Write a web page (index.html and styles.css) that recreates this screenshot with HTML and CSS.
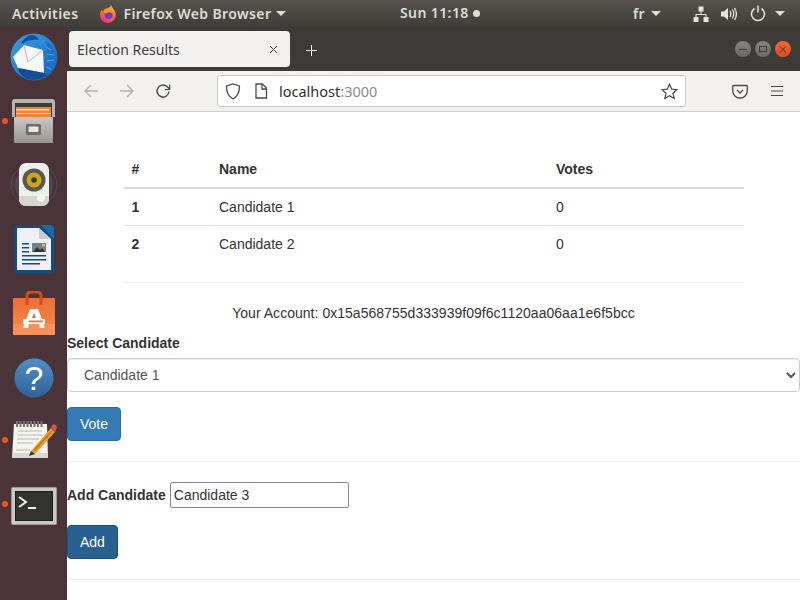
FILE: index.html
```html
<!DOCTYPE html>
<html lang="en">
<head>
    <meta charset="UTF-8">
    <title>Election Results</title>
    <link rel="stylesheet" href="styles.css">
</head>
<body>
    <header class="topbar">
        <span class="activities">Activities</span>
        <span class="app-menu">
            <svg class="fx-small" width="20" height="20" viewBox="0 0 20 20">
                <defs>
                    <linearGradient id="fxa" x1="0.7" y1="0" x2="0.3" y2="1"><stop offset="0" stop-color="#ffc02e"/><stop offset="0.5" stop-color="#ff6a2a"/><stop offset="1" stop-color="#e6308a"/></linearGradient>
                </defs>
                <path d="M13 1c.5 2 2 3 3.200 5 1.300 2.200 1.800 4.400 1.300 6.500C17 16 14 19 10 19c-4.500 0-8-3.500-8-8 0-2.200.7-4 2-5.500 0 1 .3 1.700 1 2.200C5.500 5.500 7 4.500 9 4.200 11 3.800 12.500 3 13 1z" fill="url(#fxa)"/>
                <circle cx="10.500" cy="11" r="4" fill="#6d3fc0"/>
                <path d="M5.500 8c1.500-1.600 3.500-2 5.500-1.500 2 .5 3 1.500 3.500 3-1.500-1.200-3.500-1.400-5-1-.8.300-1.200.8-1.300 1.500z" fill="#ff9a20"/>
            </svg>
            Firefox Web Browser <i class="caret"></i>
        </span>
        <span class="clock">Sun 11:18 <i class="dot"></i></span>
        <span class="status">
            <span class="lang">fr</span><i class="caret"></i>
            <svg class="net" width="16" height="16" viewBox="0 0 16 16" fill="#e6e4de"><rect x="5.500" y="0.500" width="5" height="5"/><rect x="0.500" y="11" width="5" height="5"/><rect x="10.500" y="11" width="5" height="5"/><path d="M7.500 5h1v3h5v3h-1V9h-9v2h-1V8h5z"/></svg>
            <svg class="vol" width="17" height="16" viewBox="0 0 17 16" fill="none"><path d="M1 5.500h3l4-3.500v12l-4-3.500H1z" fill="#e6e4de"/><path d="M10 5c1 1.800 1 4.200 0 6M12.300 3.500c1.800 2.800 1.800 6.200 0 9M14.500 2c2.300 3.600 2.300 8.400 0 12" stroke="#e6e4de" stroke-width="1.300"/></svg>
            <svg class="pow" width="16" height="17" viewBox="0 0 16 17" fill="none" stroke="#e6e4de" stroke-width="1.500"><path d="M4.500 3.500a6.500 6.500 0 1 0 7 0"/><path d="M8 0.500v7"/></svg>
            <i class="caret"></i>
        </span>
    </header>

    <div class="desktop">
        <nav class="dock">
            <div class="dock-item">
                <svg width="48" height="48" viewBox="0 0 48 48">
                    <defs>
                        <linearGradient id="tb" x1="0" y1="0" x2="1" y2="1"><stop offset="0" stop-color="#3aa0ea"/><stop offset="1" stop-color="#1560b0"/></linearGradient>
                    </defs>
                    <circle cx="24" cy="24" r="23.500" fill="url(#tb)"/>
                    <path d="M36 8c5 4 9 10 10 17-1 7-4 13-9 17 3-6 3-12 1-18-1-6-1-11-2-16z" fill="#1d6fc2"/>
                    <path d="M36 14l5 3M37 21l7 1M37 28l7-1M36 34l5 2" stroke="#8cc4ee" stroke-width="1" opacity="0.6"/>
                    <path d="M8 16C10 6 18 0 24 1c6 1 12 6 13 14-5-5-18-8-29 1z" fill="#2d8ddb"/>
                    <path d="M11 11c3-6 8-9 12-9 3 1 5 3 6 5-6-1-12 0-18 4z" fill="#164f93"/>
                    <circle cx="13" cy="9" r="1" fill="#0c2c55"/>
                    <path d="M3 24L14 12l19 5 1 23-26-5z" fill="#f6f7f9"/>
                    <path d="M14 12l4 17 15-12" fill="none" stroke="#b4bac6" stroke-width="1"/>
                    <path d="M8 35l26 5 3 2c-6 5-15 6-22 3-3-2-6-5-7-10z" fill="#134d92"/>
                </svg>
            </div>
            <div class="dock-item active">
                <svg width="43" height="44" viewBox="0 0 43 44">
                    <defs>
                        <linearGradient id="cab" x1="0" y1="0" x2="0" y2="1"><stop offset="0" stop-color="#c9c8c5"/><stop offset="1" stop-color="#96958f"/></linearGradient>
                    </defs>
                    <path d="M0 3c0-2 1-3 3-3h37c2 0 3 1 3 3v15H0z" fill="#b5b4b0"/>
                    <rect x="3" y="4" width="37" height="14" fill="#3f3d3a"/>
                    <rect x="4" y="8" width="35" height="10" fill="#ee8434"/>
                    <rect x="4" y="10" width="33" height="1.500" fill="#fbe3bd"/>
                    <rect x="4" y="14" width="35" height="1" fill="#fbd9ac"/>
                    <rect x="2" y="18" width="39" height="26" rx="1" fill="url(#cab)"/>
                    <rect x="14" y="25" width="15" height="11" rx="1.500" fill="#6d6c68"/>
                    <rect x="16.500" y="27.500" width="10" height="5.500" rx="1" fill="#e6e6e3"/>
                </svg>
            </div>
            <div class="dock-item">
                <svg width="48" height="46" viewBox="0 0 48 46">
                    <ellipse cx="24" cy="23" rx="23" ry="21" fill="none" stroke="#56698a" stroke-width="1" opacity="0.45"/>
                    <ellipse cx="24" cy="23" rx="19" ry="19" fill="#56698a" opacity="0.35"/>
                    <rect x="9" y="1" width="30" height="43" rx="7" fill="#efefea"/>
                    <path d="M9 34h30v3c0 4-3 7-7 7H16c-4 0-7-3-7-7z" fill="#d6d6d0"/>
                    <circle cx="24" cy="18" r="11.500" fill="#5a5852"/>
                    <circle cx="24" cy="18" r="7.500" fill="#c9a914"/>
                    <circle cx="24" cy="18" r="2.800" fill="#35342f"/>
                    <circle cx="31" cy="36" r="4" fill="#f2f2ee"/>
                </svg>
            </div>
            <div class="dock-item">
                <svg width="40" height="48" viewBox="0 0 40 48">
                    <rect x="0" y="0" width="40" height="48" rx="3" fill="#0f4f7e"/>
                    <path d="M3 3h22l12 11v31H3z" fill="#eef1f3"/>
                    <path d="M27 0h10l3 3v11z" fill="#1a6ca8"/>
                    <path d="M25 3l12 11H25z" fill="#c5ced6"/>
                    <rect x="18" y="18" width="14" height="9" fill="#6f8296"/>
                    <path d="M19 27l4-5 3 3 2-2 3 4z" fill="#3d3020"/>
                    <circle cx="29.500" cy="20" r="1.500" fill="#f0c040"/>
                    <path d="M8 18h7v1.500H8zM8 22h7v1.500H8zM8 26h7v1.500H8zM8 30h24v1.500H8zM8 34h24v1.500H8zM8 38h18v1.500H8z" fill="#0f4f7e"/>
                </svg>
            </div>
            <div class="dock-item">
                <svg width="42" height="44" viewBox="0 0 42 44">
                    <defs>
                        <linearGradient id="bag" x1="0" y1="0" x2="0" y2="1"><stop offset="0" stop-color="#ee6f33"/><stop offset="1" stop-color="#f68a4f"/></linearGradient>
                    </defs>
                    <rect x="0" y="7" width="42" height="37" fill="url(#bag)"/>
                    <rect x="0" y="33" width="42" height="11" fill="#f79159"/>
                    <path d="M14 14V5c0-2.500 1.500-4 4-4h6c2.500 0 4 1.500 4 4v9" fill="none" stroke="#c9501d" stroke-width="3"/>
                    <path d="M17 18h8l7 19h-5l-1-4H16l-1 4h-5z" fill="#fff"/>
                    <path d="M19 27l2-5 2 5z" fill="#ee6f33"/>
                    <rect x="10" y="28" width="22" height="5" rx="1" fill="#fff"/>
                    <rect x="16" y="29.500" width="14" height="1.800" fill="#ee6f33"/>
                </svg>
            </div>
            <div class="dock-item dock-help">
                <svg width="40" height="40" viewBox="0 0 40 40">
                    <defs><linearGradient id="hlp" x1="0" y1="0" x2="0" y2="1"><stop offset="0" stop-color="#4f8fc6"/><stop offset="1" stop-color="#2f6297"/></linearGradient></defs>
                    <circle cx="20" cy="20" r="19.500" fill="url(#hlp)"/>
                    <text x="20" y="32" text-anchor="middle" class="help-mark">?</text>
                </svg>
            </div>
            <div class="dock-item active">
                <svg width="46" height="38" viewBox="0 0 46 38">
                    <path d="M3 3h33l1 34H1z" fill="#f4f4ef"/>
                    <path d="M1.500 32h35.500v5H1z" fill="#d9d9d1"/>
                    <path d="M6 0v6M9.500 0v6M13 0v6M16.500 0v6M20 0v6M23.500 0v6M27 0v6M30.500 0v6" stroke="#77776f" stroke-width="2"/>
                    <path d="M7 10h24M7 14h24M6 18h22M6 22h16M5 29h14" stroke="#b9b9b1" stroke-width="1"/>
                    <path d="M21 29L40 7l4 4-19 21-6 2z" fill="#ef9d2e"/>
                    <path d="M23 28L41 9l1 1-18 20z" fill="#c97a16"/>
                    <path d="M40 6l2-3 3 1 1 3-2 4z" fill="#d9504a"/>
                    <path d="M18 35l2-5 4 3z" fill="#333"/>
                </svg>
            </div>
            <div class="dock-item dock-term active">
                <svg width="46" height="38" viewBox="0 0 46 38">
                    <rect x="0.500" y="0.500" width="45" height="37" rx="1" fill="#c9c9c5" stroke="#9a9a96"/>
                    <rect x="4" y="4" width="38" height="30" fill="#1d1d1c"/>
                    <rect x="5" y="5" width="36" height="28" fill="#333331"/>
                    <path d="M8 10l7 5-7 5" fill="none" stroke="#eee" stroke-width="2"/>
                    <rect x="17" y="20" width="8" height="2" fill="#eee"/>
                </svg>
            </div>
            <div class="dock-item apps">
                <i></i><i></i><i></i><i></i><i></i><i></i><i></i><i></i><i></i>
            </div>
        </nav>

        <main class="browser">
            <div class="tabbar">
                <div class="tab">
                    <span class="tab-title">Election Results</span>
                    <svg width="9" height="9" viewBox="0 0 9 9" stroke="#4a4a48" stroke-width="1"><path d="M1 1l7 7M8 1l-7 7"/></svg>
                </div>
                <svg class="newtab" width="13" height="13" viewBox="0 0 13 13" stroke="#f0f0ee" stroke-width="1"><path d="M6.500 1v11M1 6.500h11"/></svg>
                <div class="winbtns">
                    <span class="winbtn"><svg width="16" height="16" viewBox="0 0 16 16" stroke="#3c3b37" fill="none"><path d="M4 8.500h8"/></svg></span>
                    <span class="winbtn"><svg width="16" height="16" viewBox="0 0 16 16" stroke="#3c3b37" fill="none"><rect x="4.500" y="5.500" width="7" height="5"/></svg></span>
                    <span class="winbtn close"><svg width="16" height="16" viewBox="0 0 16 16" stroke="#3c3b37" fill="none"><path d="M5 5.500l6 6M11 5.500l-6 6"/></svg></span>
                </div>
            </div>

            <div class="navbar">
                <svg class="nav-back" width="16" height="16" viewBox="0 0 16 16" fill="none" stroke="#b0b0ae" stroke-width="1.300"><path d="M15 8H2M8 2L2 8l6 6"/></svg>
                <svg class="nav-fwd" width="16" height="16" viewBox="0 0 16 16" fill="none" stroke="#b0b0ae" stroke-width="1.300"><path d="M1 8h13M8 2l6 6-6 6"/></svg>
                <svg class="nav-reload" width="16" height="16" viewBox="0 0 16 16" fill="none" stroke="#4a4a48" stroke-width="1.400"><path d="M14 8.500A6 6 0 1 1 12 3.500L14.500 6"/><path d="M14.700 1.500v5h-5" stroke-width="1.200"/></svg>
                <div class="urlbar">
                    <svg width="16" height="17" viewBox="0 0 16 17" fill="none" stroke="#4a4a48" stroke-width="1.300"><path d="M8 1l6.500 2c0 6-1.500 10.500-6.500 13C3 13.500 1.500 9 1.500 3z"/></svg>
                    <svg class="pageicon" width="14" height="16" viewBox="0 0 14 16" fill="none" stroke="#4a4a48" stroke-width="1.300"><path d="M2 1h6.500L12.500 5v10H2z"/><path d="M8 1v5h4.500"/></svg>
                    <span class="host">localhost<span class="port">:3000</span></span>
                    <svg class="star" width="17" height="17" viewBox="0 0 17 17" fill="none" stroke="#4a4a48" stroke-width="1.200"><path d="M8.500 1.200l2.200 4.900 5.300.6-4 3.500 1.200 5.300-4.700-2.800-4.700 2.800 1.200-5.300-4-3.500 5.300-.6z"/></svg>
                </div>
                <svg class="pocket" width="16" height="15" viewBox="0 0 16 15" fill="none" stroke="#4a4a48" stroke-width="1.300"><path d="M1.500 1.500h13c.5 0 .8.300.8.800V7a7.300 7 0 0 1-14.600 0V2.300c0-.5.300-.8.800-.8z"/><path d="M5 6l3 3 3-3"/></svg>
                <svg class="menu" width="14" height="12" viewBox="0 0 14 12" stroke="#4a4a48" stroke-width="1.200"><path d="M1 1.500h12M1 6h12M1 10.500h12"/></svg>
            </div>

            <div class="page">
                <table class="results">
                    <thead>
                        <tr><th class="col-id">#</th><th class="col-name">Name</th><th>Votes</th></tr>
                    </thead>
                    <tbody>
                        <tr><th>1</th><td>Candidate 1</td><td>0</td></tr>
                        <tr><th>2</th><td>Candidate 2</td><td>0</td></tr>
                    </tbody>
                </table>
                <hr class="results-rule">
                <p class="account">Your Account: 0x15a568755d333939f09f6c1120aa06aa1e6f5bcc</p>

                <form class="vote-form">
                    <label for="candidate">Select Candidate</label>
                    <select id="candidate" class="select">
                        <option>Candidate 1</option>
                        <option>Candidate 2</option>
                    </select>
                    <button type="button" class="btn">Vote</button>
                </form>
                <hr>
                <form class="add-form">
                    <div class="add-row">
                        <label for="newCandidate">Add Candidate</label>
                        <input id="newCandidate" type="text" value="Candidate 3">
                    </div>
                    <button type="button" class="btn btn-dark">Add</button>
                </form>
                <hr>
            </div>
        </main>
    </div>
</body>
</html>
```

FILE: styles.css
```css
html, body {
    margin: 0;
    height: 100%;
    overflow: hidden;
}

body {
    width: 800px;
    height: 600px;
    display: flex;
    flex-direction: column;
    font-family: "Liberation Sans", Arial, sans-serif;
    font-size: 14px;
    line-height: 20px;
    color: #333;
    background-color: #fff;
}

/* barra superior */
.topbar {
    height: 27px;
    flex: none;
    display: flex;
    align-items: center;
    position: relative;
    z-index: 1;
    background: linear-gradient(#55534c, #3e3d38);
    color: #dfddd6;
    font-family: "Noto Sans", sans-serif;
    font-size: 14px;
    font-weight: 600;
    letter-spacing: 0.4px;
    white-space: nowrap;
}

.activities {
    margin-left: 12px;
}

.app-menu {
    margin-left: 20px;
    display: flex;
    align-items: center;
    gap: 5px;
}

.clock {
    position: absolute;
    left: 400px;
    top: 3px;
    display: flex;
    align-items: center;
    gap: 4px;
}

.dot {
    width: 7px;
    height: 7px;
    border-radius: 50%;
    background-color: #dfddd6;
}

.caret {
    display: inline-block;
    width: 0;
    height: 0;
    border-left: 5px solid transparent;
    border-right: 5px solid transparent;
    border-top: 5px solid #dfddd6;
}

.status {
    margin-left: auto;
    margin-right: 15px;
    display: flex;
    align-items: center;
}

.lang {
    margin-right: 6px;
}

.net {
    margin-left: 32px;
}

.vol {
    margin-left: 11px;
}

.pow {
    margin-left: 13px;
    margin-right: 9px;
}

.desktop {
    flex: 1;
    display: flex;
    min-height: 0;
}

/* dock */
.dock {
    width: 67px;
    flex: none;
    margin-top: -2px;
    background-color: #4a3439;
    display: flex;
    flex-direction: column;
    align-items: center;
}

.dock-item {
    height: 63.900px;
    flex: none;
    width: 100%;
    display: flex;
    align-items: center;
    justify-content: center;
    position: relative;
}

.dock-item.active::before {
    content: "";
    position: absolute;
    left: 2px;
    top: 50%;
    width: 6px;
    height: 6px;
    margin-top: -3px;
    border-radius: 50%;
    background-color: #e95420;
}

.dock-help svg {
    margin-top: 3px;
}

.dock-term svg {
    margin-top: 4px;
}

.help-mark {
    font-family: "Liberation Sans", sans-serif;
    font-size: 34px;
    fill: #fff;
}

.apps {
    display: grid;
    grid-template-columns: repeat(3, 6px);
    grid-auto-rows: 6px;
    gap: 6px;
    justify-content: center;
    align-content: center;
}

.apps i {
    border-radius: 50%;
    background-color: #eeeeec;
}

/* ventana del navegador */
.browser {
    flex: 1;
    min-width: 0;
    display: flex;
    flex-direction: column;
    overflow: hidden;
}

.tabbar {
    height: 44px;
    flex: none;
    display: flex;
    align-items: center;
    background-color: #3c3b37;
}

.tab {
    width: 221px;
    height: 36px;
    margin-left: 2px;
    padding: 0 12px 0 8px;
    box-sizing: border-box;
    display: flex;
    align-items: center;
    justify-content: space-between;
    background-color: #f2f1f0;
    border-radius: 4px;
    color: #3d3d3b;
    font-family: "Noto Sans", sans-serif;
    font-size: 14px;
}

.tab-title {
    padding-top: 2px;
}

.newtab {
    margin-left: 15px;
    margin-top: 2px;
}

.winbtns {
    margin-left: auto;
    margin-right: 9px;
    display: flex;
    gap: 4px;
}

.winbtn {
    width: 16px;
    height: 16px;
    border-radius: 50%;
    background: linear-gradient(#84837d, #6a6964);
}

.winbtn svg {
    display: block;
}

.winbtn.close {
    background: linear-gradient(#f0683a, #df4c18);
}

.navbar {
    height: 41px;
    flex: none;
    display: flex;
    align-items: center;
    box-sizing: border-box;
    background-color: #f2f1f0;
    border-bottom: 1px solid #cfcecc;
}

.nav-back {
    margin-left: 16px;
}

.nav-fwd {
    margin-left: 20px;
}

.nav-reload {
    margin-left: 20px;
}

.urlbar {
    width: 469px;
    height: 32px;
    margin-left: 46px;
    padding: 0 7px;
    box-sizing: border-box;
    display: flex;
    align-items: center;
    background-color: #fff;
    border: 1px solid #c9c8c6;
    border-radius: 3px;
    font-family: "Noto Sans", sans-serif;
    font-size: 14.500px;
    color: #2f2f2d;
}

.pageicon {
    margin-left: 13px;
}

.host {
    margin-left: 11px;
}

.port {
    color: #8a8a88;
}

.star {
    margin-left: auto;
}

.pocket {
    margin-left: 46px;
}

.menu {
    margin-left: 22px;
}

/* contenido */
.page {
    flex: 1;
    min-height: 0;
    overflow: hidden;
    padding-top: 39px;
    background-color: #fff;
}

.results {
    width: 620px;
    margin: 0 auto;
    border-collapse: collapse;
}

.results th,
.results td {
    padding: 8px;
    text-align: left;
    line-height: 20px;
    border-top: 1px solid #ddd;
}

.results thead th {
    border-top: 0;
    border-bottom: 2px solid #ddd;
}

.col-id {
    width: 71.500px;
}

.col-name {
    width: 321px;
}

hr {
    margin: 20px 0;
    border: 0;
    border-top: 1px solid #eee;
}

.results-rule {
    width: 620px;
    margin: 20px auto;
}

.account {
    margin: 0 0 10px;
    text-align: center;
    letter-spacing: 0.03px;
}

label {
    display: inline-block;
    font-weight: bold;
    margin-bottom: 5px;
}

.select {
    display: block;
    width: 100%;
    height: 34px;
    padding: 6px 12px;
    box-sizing: border-box;
    margin-bottom: 15px;
    font-family: inherit;
    font-size: 14px;
    color: #555;
    background-color: #fff;
    border: 1px solid #ccc;
    border-radius: 4px;
    box-shadow: inset 0 1px 1px rgba(0, 0, 0, 0.075);
}

.btn {
    display: block;
    padding: 6px 12px;
    font-family: inherit;
    font-size: 14px;
    line-height: 20px;
    color: #fff;
    background-color: #337ab7;
    border: 1px solid #2e6da4;
    border-radius: 4px;
}

.btn-dark {
    background-color: #286090;
    border-color: #204d74;
}

.add-row {
    display: flex;
    align-items: center;
    gap: 4px;
    margin-bottom: 17px;
}

.add-row label {
    margin-bottom: 0;
}

.add-row input {
    width: 179px;
    height: 26px;
    box-sizing: border-box;
    padding: 1px 3px;
    font-family: inherit;
    font-size: 14px;
    color: #333;
    border: 1px solid #85849a;
    border-radius: 2px;
}
```
